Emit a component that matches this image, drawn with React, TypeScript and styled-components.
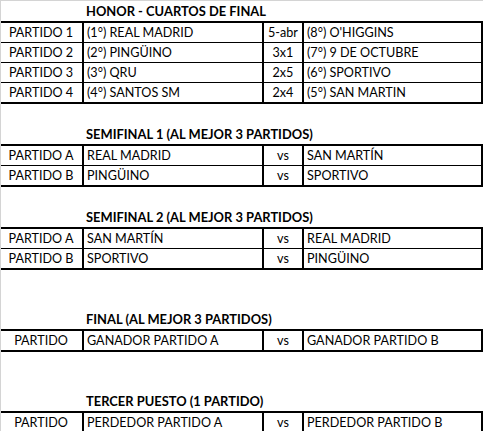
import React from 'react';
import styled, { createGlobalStyle } from 'styled-components';

const GlobalStyle = createGlobalStyle`
  html, body {
    margin: 0;
    padding: 0;
    background: #ffffff;
  }
  body {
    font-family: Lato, "Liberation Sans", Arial, sans-serif;
    font-size: 12.6px;
    color: #000000;
  }
`;

// hoja completa, con la línea gris de la cuadrícula arriba y a la izquierda
const Sheet = styled.div`
  width: 483px;
  height: 431px;
  box-sizing: border-box;
  border-top: 1px solid #d4d4d4;
  border-left: 1px solid #d4d4d4;
  overflow: hidden;
`;

const Title = styled.div<{ gap: number }>`
  padding-top: ${({ gap }) => gap}px;
  padding-left: 85px;
  height: 19px;
  line-height: 19px;
  font-size: 12.9px;
  font-weight: 700;
  white-space: nowrap;
`;

const Table = styled.div`
  border-top: 2px solid #000;
  border-bottom: 2px solid #000;
  border-right: 2px solid #000;
  margin-left: -1px;
`;

const Row = styled.div`
  display: grid;
  grid-template-columns: 82px 180px 40px 1fr;
  height: 19px;
  & + & {
    border-top: 1px solid #000;
  }
`;

const Cell = styled.div<{ align?: 'left' | 'center' }>`
  line-height: 19px;
  white-space: nowrap;
  overflow: hidden;
  text-align: ${({ align }) => align || 'left'};
  padding-left: ${({ align }) => (align === 'center' ? '0' : '3px')};
  & + & {
    border-left: 2px solid #000;
  }
`;

type Match = [string, string, string, string];

const cuartos: Match[] = [
  ['PARTIDO 1', '(1°) REAL MADRID', '5-abr', "(8°) O'HIGGINS"],
  ['PARTIDO 2', '(2°) PINGÜINO', '3x1', '(7°) 9 DE OCTUBRE'],
  ['PARTIDO 3', '(3°) QRU', '2x5', '(6°) SPORTIVO'],
  ['PARTIDO 4', '(4°) SANTOS SM', '2x4', '(5°) SAN MARTIN'],
];

const sections: { title: string; gap: number; rows: Match[] }[] = [
  { title: 'HONOR - CUARTOS DE FINAL', gap: 1, rows: cuartos },
  {
    title: 'SEMIFINAL 1 (AL MEJOR 3 PARTIDOS)',
    gap: 21,
    rows: [
      ['PARTIDO A', 'REAL MADRID', 'vs', 'SAN MARTÍN'],
      ['PARTIDO B', 'PINGÜINO', 'vs', 'SPORTIVO'],
    ],
  },
  {
    title: 'SEMIFINAL 2 (AL MEJOR 3 PARTIDOS)',
    gap: 21,
    rows: [
      ['PARTIDO A', 'SAN MARTÍN', 'vs', 'REAL MADRID'],
      ['PARTIDO B', 'SPORTIVO', 'vs', 'PINGÜINO'],
    ],
  },
  {
    title: 'FINAL (AL MEJOR 3 PARTIDOS)',
    gap: 40,
    rows: [['PARTIDO', 'GANADOR PARTIDO A', 'vs', 'GANADOR PARTIDO B']],
  },
  {
    title: 'TERCER PUESTO (1 PARTIDO)',
    gap: 40,
    rows: [['PARTIDO', 'PERDEDOR PARTIDO A', 'vs', 'PERDEDOR PARTIDO B']],
  },
];

const App: React.FC = () => {
  return (
    <>
      <GlobalStyle />
      <Sheet>
        {sections.map((s) => (
          <div key={s.title}>
            <Title gap={s.gap}>{s.title}</Title>
            <Table>
              {s.rows.map((r) => (
                <Row key={r[0]}>
                  <Cell align="center">{r[0]}</Cell>
                  <Cell>{r[1]}</Cell>
                  <Cell align="center">{r[2]}</Cell>
                  <Cell>{r[3]}</Cell>
                </Row>
              ))}
            </Table>
          </div>
        ))}
      </Sheet>
    </>
  );
};

export default App;
